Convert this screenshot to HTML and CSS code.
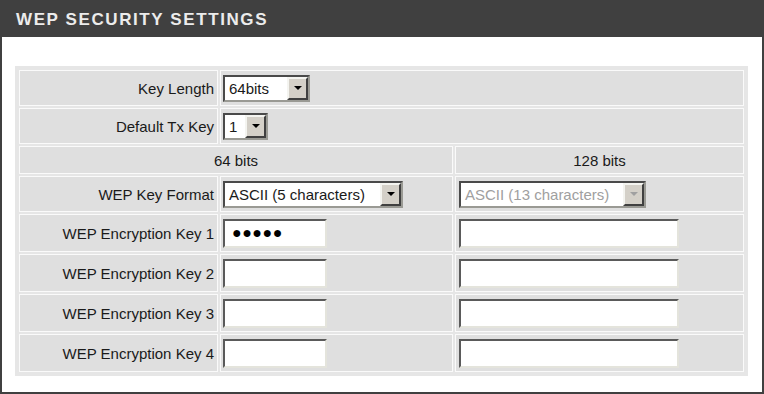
FILE: index.html
```html
<!DOCTYPE html>
<html lang="en">
<head>
    <meta charset="UTF-8">
    <title>WEP Security Settings</title>
    <link rel="stylesheet" href="styles.css">
</head>
<body>
    <div class="panel">
        <div class="panel-title">WEP SECURITY SETTINGS</div>

        <div class="panel-body">
            <table class="wep-table">
                <colgroup>
                    <col class="col-label">
                    <col class="col-64">
                    <col class="col-128">
                </colgroup>
                <tr class="row-select">
                    <td class="label">Key Length</td>
                    <td class="field" colspan="2">
                        <span class="combo combo-len"><span class="combo-text">64bits</span><span class="combo-btn"></span></span>
                    </td>
                </tr>
                <tr class="row-select">
                    <td class="label">Default Tx Key</td>
                    <td class="field" colspan="2">
                        <span class="combo combo-tx"><span class="combo-text">1</span><span class="combo-btn"></span></span>
                    </td>
                </tr>
                <tr class="row-head">
                    <td class="center" colspan="2">64 bits</td>
                    <td class="center">128 bits</td>
                </tr>
                <tr class="row-select">
                    <td class="label">WEP Key Format</td>
                    <td class="field">
                        <span class="combo combo-fmt"><span class="combo-text">ASCII (5 characters)</span><span class="combo-btn"></span></span>
                    </td>
                    <td class="field wide">
                        <span class="combo combo-fmt13 disabled"><span class="combo-text">ASCII (13 characters)</span><span class="combo-btn"></span></span>
                    </td>
                </tr>
                <!-- 키 입력 4줄 -->
                <tr class="row-key">
                    <td class="label">WEP Encryption Key 1</td>
                    <td class="field"><input class="key-input short pw" type="text" value="●●●●●"></td>
                    <td class="field wide"><input class="key-input long" type="text" value=""></td>
                </tr>
                <tr class="row-key">
                    <td class="label">WEP Encryption Key 2</td>
                    <td class="field"><input class="key-input short" type="text" value=""></td>
                    <td class="field wide"><input class="key-input long" type="text" value=""></td>
                </tr>
                <tr class="row-key">
                    <td class="label">WEP Encryption Key 3</td>
                    <td class="field"><input class="key-input short" type="text" value=""></td>
                    <td class="field wide"><input class="key-input long" type="text" value=""></td>
                </tr>
                <tr class="row-key">
                    <td class="label">WEP Encryption Key 4</td>
                    <td class="field"><input class="key-input short" type="text" value=""></td>
                    <td class="field wide"><input class="key-input long" type="text" value=""></td>
                </tr>
            </table>
        </div>
    </div>
</body>
</html>
```

FILE: styles.css
```css
/* 기본 스타일 */
* {
    box-sizing: border-box;
}
body {
    margin: 0;
    font-family: "Liberation Sans", Arial, sans-serif;
    font-size: 15px;
    color: #1a1a1a;
    background-color: #fff;
}
.panel {
    width: 764px;
    height: 394px;
    border: 2px solid #404040;
    background-color: #fff;
}
.panel-title {
    height: 35px;
    line-height: 35px;
    padding-left: 14px;
    background-color: #404040;
    color: #ececec;
    font-size: 17px;
    font-weight: bold;
    letter-spacing: 1.6px;
}
.panel-body {
    padding: 29px 14px 0 13px;
}
.wep-table {
    width: 733px;
    table-layout: fixed;
    border-spacing: 2px;
    border: 2px solid #e6e6e6;
    background-color: #e6e6e6;
}
.col-label { width: 199px; }
.col-64 { width: 233px; }
.col-128 { width: 289px; }

.wep-table td {
    background-color: #dfdfdf;
    border: 1px solid #fafafa;
    padding: 0 2px;
    vertical-align: middle;
    white-space: nowrap;
}
.row-select td { height: 36px; }
.row-head td { height: 28px; }
.row-key td { height: 38px; }

.wep-table td.label {
    text-align: right;
    padding-right: 3px;
}
.wep-table td.center {
    text-align: center;
}
.wep-table td.wide {
    padding-left: 3px;
}

/* 콤보박스 */
.combo {
    display: inline-flex;
    vertical-align: middle;
    height: 27px;
    border: 2px solid;
    border-color: #4a4a4a #9a9a94 #9a9a94 #4a4a4a;
    background-color: #fff;
}
.combo-text {
    flex: 1;
    padding-left: 4px;
    line-height: 23px;
}
.combo-btn {
    width: 21px;
    height: 23px;
    display: flex;
    align-items: center;
    justify-content: center;
    background-color: #d4d0c8;
    border: 2px solid;
    border-color: #f4f4f0 #404040 #404040 #f4f4f0;
}
.combo-btn::after {
    content: "";
    border-left: 4px solid transparent;
    border-right: 4px solid transparent;
    border-top: 4px solid #000;
}
.combo-len { width: 87px; }
.combo-tx { width: 45px; }
.combo-fmt { width: 180px; }
.combo-fmt13 { width: 187px; }
.combo.disabled .combo-text {
    color: #a0a0a0;
}
.combo.disabled .combo-btn::after {
    border-top-color: #a0a0a0;
}

/* 입력칸 */
.key-input {
    height: 29px;
    vertical-align: middle;
    border: 2px solid;
    border-color: #5a5a5a #e4e4dc #e4e4dc #5a5a5a;
    background-color: #fff;
    padding: 0 7px;
    font-family: "Liberation Sans", Arial, sans-serif;
    font-size: 15px;
    color: #000;
    outline: none;
}
.key-input.short { width: 104px; }
.key-input.long { width: 220px; }
.key-input.pw {
    font-size: 16px;
    letter-spacing: 0.5px;
}
```
